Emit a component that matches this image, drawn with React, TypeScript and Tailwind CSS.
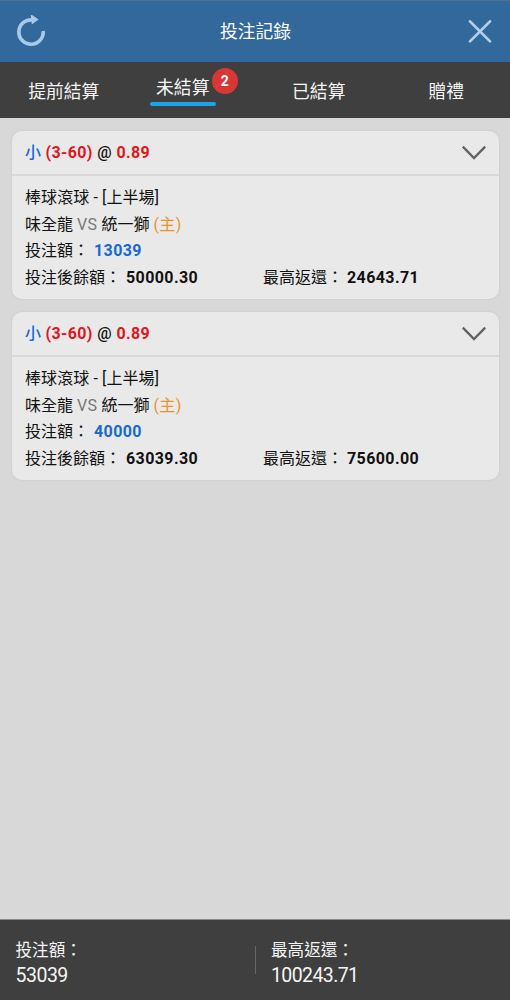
interface Bet {
  id: number;
  stake: string;
  balance: string;
  maxReturn: string;
}

const bets: Bet[] = [
  { id: 1, stake: "13039", balance: "50000.30", maxReturn: "24643.71" },
  { id: 2, stake: "40000", balance: "63039.30", maxReturn: "75600.00" },
];

const tabs = [
  { label: "提前結算" },
  { label: "未結算", count: 2 },
  { label: "已結算" },
  { label: "贈禮" },
];

function RefreshIcon() {
  return (
    <svg width="30" height="34" viewBox="0 0 30 34" fill="none">
      <path d="M17 5A12.2 12.2 0 1 0 27.2 16" stroke="#a9c9ec" strokeWidth="3.6" />
      <path d="M14.6 -1L22.6 4.4L15.8 9.6Z" fill="#a9c9ec" />
    </svg>
  );
}

function CloseIcon() {
  return (
    <svg width="24" height="24" viewBox="0 0 24 24" fill="none">
      <path d="M2 1.4L22 21.4M22 1.4L2 21.4" stroke="#b4cfee" strokeWidth="2.7" strokeLinecap="round" />
    </svg>
  );
}

function ChevronIcon() {
  return (
    <svg width="26" height="16" viewBox="0 0 26 16" fill="none">
      <path d="M1.8 1.6L13 13.1L24.2 1.6" stroke="#626262" strokeWidth="2.3" />
    </svg>
  );
}

function BetCard({ bet }: { bet: Bet }) {
  return (
    <section className="h-[168px] rounded-[10px] bg-[#e9e9e9] text-[16px] text-[#111] shadow-[0_0_3px_rgba(0,0,0,0.08)]">
      <div className="flex h-[45px] items-center justify-between border-b-2 border-[#d8d8d8] pr-3 pl-[13px]">
        <div className="font-bold tracking-[0.4px]">
          <span className="font-medium tracking-normal text-[#1768d8]">小</span>{" "}
          <span className="text-[#e3151b]">(3-60)</span>{" "}
          <span className="font-medium">@</span>{" "}
          <span className="text-[#e3151b]">0.89</span>
        </div>
        <ChevronIcon />
      </div>
      <div className="px-[13px] pt-[9px] leading-[26.5px]">
        <div className="tracking-[0.1px]">棒球滾球 - [上半場]</div>
        <div>
          味全龍 <span className="tracking-[0.4px] text-[#777]">VS</span> 統一獅{" "}
          <span className="tracking-[0.4px] text-[#ed9226]">(主)</span>
        </div>
        <div>
          投注額： <b className="ml-px tracking-[0.4px] text-[#1768d8]">{bet.stake}</b>
        </div>
        <div className="flex">
          <div className="w-[238px]">
            投注後餘額： <b className="ml-px tracking-[0.4px]">{bet.balance}</b>
          </div>
          <div>
            最高返還： <b className="tracking-[0.4px]">{bet.maxReturn}</b>
          </div>
        </div>
      </div>
    </section>
  );
}

export default function App() {
  return (
    <div className="flex h-[1000px] w-[510px] flex-col bg-[#d8d8d8] font-[Roboto,'Noto_Sans_CJK_TC',sans-serif]">
      <header className="flex h-[62px] items-center justify-between border-t border-[#4f7090] bg-[#32689b] pr-[18px] pl-4">
        <RefreshIcon />
        <h1 className="mt-px mr-[3px] text-[17.8px] text-white">投注記錄</h1>
        <CloseIcon />
      </header>

      <nav className="grid h-14 grid-cols-4 bg-[#3f3f3f] text-[17.8px] text-[#f5f5f5]">
        {tabs.map(tab =>
          tab.count ? (
            <div key={tab.label} className="flex justify-center pt-[6px] pr-[2px] pl-[7px]">
              <div className="mt-[5px] h-[33px] w-[66px]">
                <div className="pt-px text-center leading-[28px]">{tab.label}</div>
                <div className="h-1 rounded-full bg-[#1ca4e8]" />
              </div>
              <span className="-ml-1 flex size-[26px] items-center justify-center rounded-full bg-[#d93636] text-[14px] font-bold">
                {tab.count}
              </span>
            </div>
          ) : (
            <div key={tab.label} className="flex items-center justify-center pt-[5px]">
              {tab.label}
            </div>
          )
        )}
      </nav>

      <main className="flex flex-1 flex-col gap-[13px] pt-[13px] pr-[11px] pl-3">
        {bets.map(bet => (
          <BetCard key={bet.id} bet={bet} />
        ))}
      </main>

      <footer className="flex h-[81px] items-center border-t border-[#8b8b8b] bg-[#3f3f3f] text-[#f5f5f5]">
        <div className="w-[255px] pt-[6px] pl-[15.5px]">
          <div className="text-[16.6px] leading-[25px]">投注額：</div>
          <div className="text-[19.5px] leading-[25px] tracking-[-0.5px]">53039</div>
        </div>
        <div className="h-7 w-px bg-[#666]" />
        <div className="pt-[6px] pl-[15px]">
          <div className="text-[16.6px] leading-[25px]">最高返還：</div>
          <div className="text-[19.5px] leading-[25px] tracking-[-0.6px]">100243.71</div>
        </div>
      </footer>
    </div>
  );
}
